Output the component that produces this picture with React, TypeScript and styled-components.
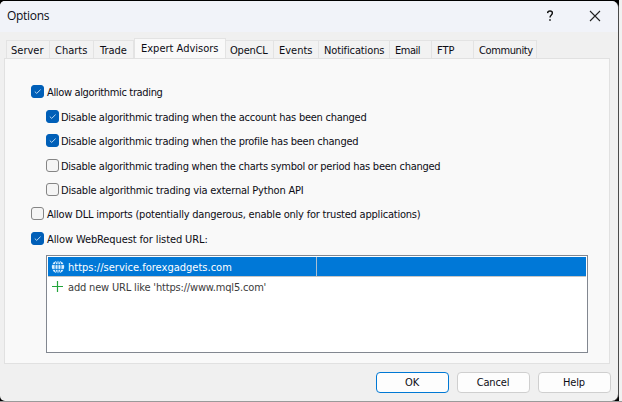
import React from "react";
import styled, { createGlobalStyle } from "styled-components";

const GlobalStyle = createGlobalStyle`
  * { box-sizing: border-box; }
  body { margin: 0; background: #eeeeee; overflow: hidden; }
`;

const Desktop = styled.div`
  width: 622px;
  height: 402px;
  padding-top: 1px;
  background: linear-gradient(to right, #000 619px, #f1f1f1 619px);
  border-bottom: 1px solid #9a9a9a;
  font: 11px/14px "DejaVu Sans Condensed", "DejaVu Sans", sans-serif;
  color: #0c0c14;
`;

const Dialog = styled.div`
  display: flex;
  flex-direction: column;
  width: 619px;
  height: 400px;
  background: #f0f0f0;
  border-right: 1px solid #4a4a4a;
  border-radius: 5px 7px 7px 5px;
  overflow: hidden;
`;

const TitleBar = styled.header`
  display: flex;
  align-items: center;
  flex: none;
  height: 31px;
  padding: 0 17px 2px 7px;
  background: #f1f3f9;
`;

const Title = styled.h1`
  flex: 1;
  margin: 0;
  font: 400 12px/16px "Open Sans", "Noto Sans", sans-serif;
  letter-spacing: -0.3px;
`;

const TitleButton = styled.button`
  display: flex;
  padding: 0;
  margin-left: 35px;
  border: 0;
  background: none;
`;

const Tabs = styled.nav`
  display: flex;
  align-items: flex-end;
  flex: none;
  height: 27px;
  padding-left: 6px;
  margin-bottom: -1px;
`;

const Tab = styled.div<{ $width: number; $inset: number; $spacing?: number; $active?: boolean }>`
  flex: none;
  width: ${(p) => p.$width}px;
  height: ${(p) => (p.$active ? 21 : 19)}px;
  padding-top: 3px;
  padding-left: ${(p) => p.$inset}px;
  border: 1px solid #e3e3e3;
  border-left-width: ${(p) => (p.$active ? 1 : 0)}px;
  border-bottom-color: ${(p) => (p.$active ? "#f9f9f9" : "#e1e1e1")};
  background: ${(p) => (p.$active ? "#f9f9f9" : "#f2f2f2")};
  letter-spacing: ${(p) => p.$spacing ?? 0}px;
  white-space: nowrap;
  &:first-child { border-left-width: 1px; }
`;

const Panel = styled.main`
  flex: none;
  width: 606px;
  height: 306px;
  margin-left: 4px;
  padding: 26px 0 0 26px;
  border: 1px solid #e1e1e1;
  background: #f9f9f9;
`;

const Option = styled.div<{ $height: number; $nested?: boolean; $spacing: number }>`
  display: flex;
  align-items: flex-start;
  height: ${(p) => p.$height}px;
  padding-left: ${(p) => (p.$nested ? 15 : 0)}px;
  gap: ${(p) => (p.$nested ? 2 : 3)}px;
  letter-spacing: ${(p) => p.$spacing}px;
  line-height: 16px;
  white-space: nowrap;
`;

const Box = styled.span<{ $checked?: boolean }>`
  display: flex;
  flex: none;
  width: 13px;
  height: 13px;
  border: 1px solid ${(p) => (p.$checked ? "#005fb8" : "#858585")};
  border-radius: 3px;
  background: ${(p) => (p.$checked ? "#005fb8" : "#f5f5f5")};
`;

const UrlList = styled.div`
  width: 542px;
  height: 98px;
  margin-left: 15px;
  padding: 1px;
  border: 1px solid #828790;
  background: #fff;
`;

const UrlRow = styled.div<{ $selected?: boolean; $spacing: number }>`
  display: grid;
  grid-template-columns: 20px 249px 1fr;
  align-items: center;
  height: 20px;
  color: ${(p) => (p.$selected ? "#fff" : "#3c3c3c")};
  background: ${(p) => (p.$selected ? "#0078d7" : "#fff")};
  border-bottom: 1px solid ${(p) => (p.$selected ? "#c5c5c5" : "#fff")};
  letter-spacing: ${(p) => p.$spacing}px;
  white-space: nowrap;
  svg { margin-left: 3px; }
`;

const UrlCell = styled.span<{ $divided?: boolean }>`
  height: 19px;
  line-height: 22px;
  border-right: 1px solid ${(p) => (p.$divided ? "#a9bfd2" : "transparent")};
`;

const Footer = styled.footer`
  display: flex;
  justify-content: flex-end;
  gap: 8px;
  padding: 8px 7px 0 0;
`;

const DialogButton = styled.button<{ $primary?: boolean }>`
  width: 73px;
  height: 21px;
  padding: 1px 1px 0 0;
  font: inherit;
  color: inherit;
  letter-spacing: -0.15px;
  border: 1px solid ${(p) => (p.$primary ? "#0078d4" : "#cfcfcf")};
  border-radius: 4px;
  background: #fdfdfd;
`;

const Check = ({ on }: { on?: boolean }) => (
  <Box $checked={on}>
    {on && (
      <svg width="11" height="11" viewBox="0 0 11 11" fill="none" stroke="#b9d8f3" strokeWidth="1">
        <path d="M2.8 5.6 4.7 7.4 8.6 3.6" />
      </svg>
    )}
  </Box>
);

const Globe = () => (
  <svg width="14" height="14" viewBox="0 0 14 14" fill="none">
    <circle cx="7" cy="7" r="6.2" fill="#d9efff" />
    <g stroke="#0078d7" strokeWidth="0.9">
      <path d="M.5 4.6h13M.5 9.4h13M7 .5v13" />
      <ellipse cx="7" cy="7" rx="3" ry="6.4" />
    </g>
  </svg>
);

const Plus = () => (
  <svg width="13" height="13" viewBox="0 0 13 13" stroke="#22a43a" strokeWidth="1.2">
    <path d="M1 6.5h11M6.5 1v11" />
  </svg>
);

const tabs = [
  { label: "Server", width: 44, inset: 4 },
  { label: "Charts", width: 44, inset: 5 },
  { label: "Trade", width: 40, inset: 6 },
  { label: "Expert Advisors", width: 92, inset: 6, active: true },
  { label: "OpenCL", width: 48, inset: 4, spacing: -0.2 },
  { label: "Events", width: 45, inset: 5 },
  { label: "Notifications", width: 71, inset: 5, spacing: -0.12 },
  { label: "Email", width: 42, inset: 5, spacing: -0.5 },
  { label: "FTP", width: 42, inset: 5 },
  { label: "Community", width: 63, inset: 5, spacing: -0.4 },
];

const options = [
  { label: "Allow algorithmic trading", height: 25, spacing: -0.35, on: true },
  { label: "Disable algorithmic trading when the account has been changed", height: 24, spacing: -0.25, on: true, nested: true },
  { label: "Disable algorithmic trading when the profile has been changed", height: 25, spacing: -0.25, on: true, nested: true },
  { label: "Disable algorithmic trading when the charts symbol or period has been changed", height: 24, spacing: -0.255, nested: true },
  { label: "Disable algorithmic trading via external Python API", height: 24, spacing: -0.195, nested: true },
  { label: "Allow DLL imports (potentially dangerous, enable only for trusted applications)", height: 25, spacing: -0.215 },
  { label: "Allow WebRequest for listed URL:", height: 23, spacing: -0.11, on: true },
];

export default function App() {
  return (
    <Desktop>
      <GlobalStyle />
      <Dialog>
        <TitleBar>
          <Title>Options</Title>
          <TitleButton aria-label="Help">
            <svg width="8" height="12" viewBox="0 0 8 12" fill="none" stroke="#111" strokeWidth="1.4">
              <path d="M1.6 3.1C1.7 1.7 2.7 1 4 1s2.4.8 2.4 2.1C6.4 4.9 4 5 4 7.6" />
              <path d="M4 9.2v1.6" strokeWidth="1.6" />
            </svg>
          </TitleButton>
          <TitleButton aria-label="Close">
            <svg width="12" height="12" viewBox="0 0 12 12" fill="none" stroke="#222" strokeWidth="1.1">
              <path d="M1 1l10 10M11 1 1 11" />
            </svg>
          </TitleButton>
        </TitleBar>
        <Tabs>
          {tabs.map((t) => (
            <Tab key={t.label} $width={t.width} $inset={t.inset} $spacing={t.spacing} $active={t.active}>
              {t.label}
            </Tab>
          ))}
        </Tabs>
        <Panel>
          {options.map((o) => (
            <Option key={o.label} $height={o.height} $nested={o.nested} $spacing={o.spacing}>
              <Check on={o.on} />
              <span>{o.label}</span>
            </Option>
          ))}
          <UrlList>
            <UrlRow $selected $spacing={0.01}>
              <Globe />
              <UrlCell $divided>https://service.forexgadgets.com</UrlCell>
            </UrlRow>
            <UrlRow $spacing={-0.17}>
              <Plus />
              <UrlCell>add new URL like 'https://www.mql5.com'</UrlCell>
            </UrlRow>
          </UrlList>
        </Panel>
        <Footer>
          <DialogButton $primary>OK</DialogButton>
          <DialogButton>Cancel</DialogButton>
          <DialogButton>Help</DialogButton>
        </Footer>
      </Dialog>
    </Desktop>
  );
}
